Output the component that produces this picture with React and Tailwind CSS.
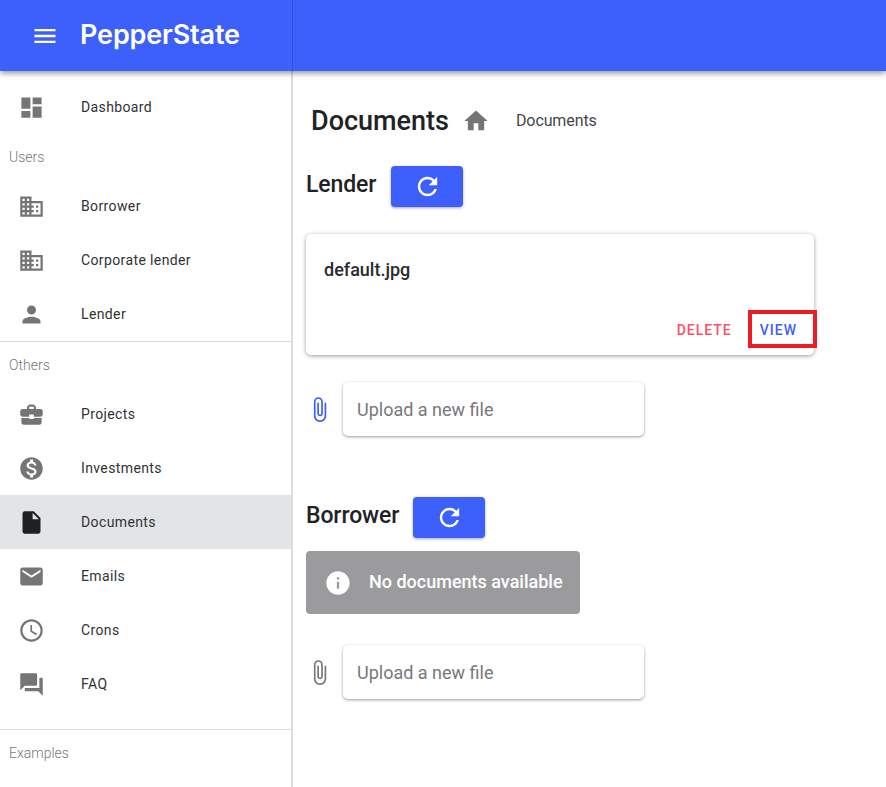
const P = {
  dashboard: "M3 13h8V3H3v10zm0 8h8v-6H3v6zm10 0h8V11h-8v10zm0-18v6h8V3h-8z",
  domain: "M12 7V3H2v18h20V7H12zM6 19H4v-2h2v2zm0-4H4v-2h2v2zm0-4H4V9h2v2zm0-4H4V5h2v2zm4 12H8v-2h2v2zm0-4H8v-2h2v2zm0-4H8V9h2v2zm0-4H8V5h2v2zm10 12h-8v-2h2v-2h-2v-2h2v-2h-2V9h8v10zm-2-8h-2v2h2v-2zm0 4h-2v2h2v-2z",
  person: "M12 12c2.21 0 4-1.79 4-4s-1.79-4-4-4-4 1.79-4 4 1.79 4 4 4zm0 2c-2.67 0-8 1.34-8 4v2h16v-2c0-2.66-5.33-4-8-4z",
  work: "M10 16v-1H3.01L3 19c0 1.11.89 2 2 2h14c1.11 0 2-.89 2-2v-4h-7v1h-4zm10-9h-4.01V5l-2-2h-4l-2 2v2H4c-1.1 0-2 .9-2 2v3c0 1.11.89 2 2 2h6v-2h4v2h6c1.1 0 2-.9 2-2V9c0-1.1-.9-2-2-2zm-6 0h-4V5h4v2z",
  money: "M12 2C6.48 2 2 6.48 2 12s4.48 10 10 10 10-4.48 10-10S17.52 2 12 2zm1.41 16.09V20h-2.67v-1.93c-1.71-.36-3.16-1.46-3.27-3.4h1.96c.1 1.05.82 1.87 2.65 1.87 1.96 0 2.4-.98 2.4-1.59 0-.83-.44-1.61-2.67-2.14-2.48-.6-4.18-1.62-4.18-3.67 0-1.72 1.39-2.84 3.11-3.21V4h2.67v1.95c1.86.45 2.79 1.86 2.85 3.39H14.3c-.05-1.11-.64-1.87-2.22-1.87-1.5 0-2.4.68-2.4 1.64 0 .84.65 1.39 2.67 1.91s4.18 1.39 4.18 3.91c-.01 1.83-1.38 2.83-3.12 3.16z",
  file: "M6 2c-1.1 0-1.99.9-1.99 2L4 20c0 1.1.89 2 1.99 2H18c1.1 0 2-.9 2-2V8l-6-6H6zm7 7V3.5L18.5 9H13z",
  email: "M20 4H4c-1.1 0-1.99.9-1.99 2L2 18c0 1.1.9 2 2 2h16c1.1 0 2-.9 2-2V6c0-1.1-.9-2-2-2zm0 4l-8 5-8-5V6l8 5 8-5v2z",
  clock: "M11.99 2C6.47 2 2 6.48 2 12s4.47 10 9.99 10C17.52 22 22 17.52 22 12S17.52 2 11.99 2zM12 20c-4.42 0-8-3.58-8-8s3.58-8 8-8 8 3.58 8 8-3.58 8-8 8zm.5-13H11v6l5.25 3.15.75-1.23-4.5-2.67z",
  faq: "M21 6h-2v9H6v2c0 .55.45 1 1 1h11l4 4V7c0-.55-.45-1-1-1zm-4 6V3c0-.55-.45-1-1-1H3c-.55 0-1 .45-1 1v14l4-4h10c.55 0 1-.45 1-1z",
  home: "M10 20v-6h4v6h5v-8h3L12 3 2 12h3v8z",
  refresh: "M17.65 6.35C16.2 4.9 14.21 4 12 4c-4.42 0-7.99 3.58-7.99 8s3.57 8 7.99 8c3.73 0 6.84-2.55 7.73-6h-2.08c-.82 2.33-3.04 4-5.65 4-3.31 0-6-2.69-6-6s2.69-6 6-6c1.66 0 3.14.69 4.22 1.78L13 11h7V4l-2.35 2.35z",
  clip: "M16.5 6v11.5c0 2.21-1.79 4-4 4s-4-1.79-4-4V5c0-1.38 1.12-2.5 2.5-2.5s2.5 1.12 2.5 2.5v10.5c0 .55-.45 1-1 1s-1-.45-1-1V6H10v9.5c0 1.38 1.12 2.5 2.5 2.5s2.5-1.12 2.5-2.5V5c0-2.21-1.79-4-4-4S7 2.79 7 5v12.5c0 3.04 2.46 5.5 5.5 5.5s5.5-2.46 5.5-5.5V6h-1.5z",
  info: "M12 2C6.48 2 2 6.48 2 12s4.48 10 10 10 10-4.48 10-10S17.52 2 12 2zm1 15h-2v-6h2v6zm0-8h-2V7h2v2z",
  menu: "M3 18h18v-2H3v2zm0-5h18v-2H3v2zm0-7v2h18V6H3z",
};

function Icon({ d, className }) {
  return (
    <svg viewBox="0 0 24 24" fill="currentColor" className={className}>
      <path d={d} />
    </svg>
  );
}

function NavItem({ icon, label, active }) {
  return (
    <div className={"flex h-[54px] items-center " + (active ? "bg-[#e3e4e6]" : "")}>
      <div className="flex w-[81px] shrink-0 pl-[18px]">
        <Icon d={icon} className={"h-[27px] w-[27px] " + (active ? "text-[#1f2023]" : "text-[#757575]")} />
      </div>
      <span className="text-[14px] leading-none tracking-[0.38px] text-[#303236]">{label}</span>
    </div>
  );
}

function Section({ label }) {
  return (
    <div className="flex h-[45px] items-center pl-[9px] pt-[2px] text-[14px] font-light text-[#777777]">{label}</div>
  );
}

function Divider() {
  return <div className="h-px bg-[#dcdddf]" />;
}

function Heading({ title, gap }) {
  return (
    <div className="flex items-center">
      <h2 className={"pb-[4px] text-[23px] font-medium leading-[37px] tracking-[-0.1px] text-[#212226] " + gap}>{title}</h2>
      <button className="flex h-[41px] w-[72px] items-center justify-center rounded-[4px] bg-[#3d5ffb] text-white shadow-[0_1px_3px_rgba(0,0,0,0.35)]">
        <Icon d={P.refresh} className="h-[29px] w-[29px]" />
      </button>
    </div>
  );
}

function Upload({ color }) {
  return (
    <div className="flex items-center">
      <div className="flex w-[37px] justify-start">
        <Icon d={P.clip} className={"h-[27px] w-[27px] " + color} />
      </div>
      <div className="flex h-[54px] w-[301px] items-center rounded-[5px] bg-white pl-[14px] text-[18px] text-[#77787c] shadow-[0_1px_3px_rgba(0,0,0,0.4)]">
        Upload a new file
      </div>
    </div>
  );
}

export default function App() {
  return (
    <div className="h-[787px] w-[886px] overflow-hidden bg-white font-['Roboto',sans-serif]">
      <header className="relative z-10 flex h-[71px] bg-[#3d5ffb] shadow-[0_2px_6px_rgba(0,0,0,0.45)]">
        <div className="flex h-full w-[293px] items-center border-r border-[#3450d6] pl-[31px]">
          <Icon d={P.menu} className="h-[28px] w-[28px] text-white" />
          <span className="ml-[21px] pb-[2px] font-['Inter',sans-serif] text-[27px] font-semibold leading-none tracking-[-0.15px] text-white">
            PepperState
          </span>
        </div>
      </header>
      <div className="flex h-[716px]">
        <aside className="h-full w-[293px] shrink-0 border-r-2 border-[#dcdddf] pt-[9px]">
          <NavItem icon={P.dashboard} label="Dashboard" />
          <Section label="Users" />
          <NavItem icon={P.domain} label="Borrower" />
          <NavItem icon={P.domain} label="Corporate lender" />
          <NavItem icon={P.person} label="Lender" />
          <Divider />
          <Section label="Others" />
          <NavItem icon={P.work} label="Projects" />
          <NavItem icon={P.money} label="Investments" />
          <NavItem icon={P.file} label="Documents" active />
          <NavItem icon={P.email} label="Emails" />
          <NavItem icon={P.clock} label="Crons" />
          <NavItem icon={P.faq} label="FAQ" />
          <div className="h-[18px]" />
          <Divider />
          <Section label="Examples" />
        </aside>
        <main className="flex-1 pl-[13px]">
          <div className="mt-[33px] flex h-[33px] items-center pl-[5px]">
            <h1 className="pt-[2px] text-[27px] font-medium leading-none text-[#212226]">Documents</h1>
            <Icon d={P.home} className="ml-[13px] h-[28px] w-[28px] text-[#757575]" />
            <span className="ml-[26px] text-[16px] tracking-[-0.1px] text-[#45474b]">Documents</span>
          </div>
          <div className="mt-[29px]">
            <Heading title="Lender" gap="mr-[15px]" />
          </div>
          <div className="relative mt-[27px] h-[121px] w-[508px] rounded-[5px] bg-white shadow-[0_1px_4px_rgba(0,0,0,0.4)]">
            <div className="pl-[18px] pt-[25px] text-[18px] font-medium leading-[22px] text-[#2a2b2f]">default.jpg</div>
            <div className="absolute right-[17px] top-[87px] flex items-center gap-[28px] text-[14px] font-medium leading-[18px] tracking-[1px]">
              <span className="text-[#fb4f6b]">DELETE</span>
              <span className="text-[#3d5ffb]">VIEW</span>
            </div>
            <div className="absolute left-[442px] top-[76px] h-[38px] w-[69px] border-[4px] border-[#ed1c24]" />
          </div>
          <div className="mt-[27px]">
            <Upload color="text-[#3d5ffb]" />
          </div>
          <div className="mt-[61px]">
            <Heading title="Borrower" gap="mr-[14px]" />
          </div>
          <div className="mt-[13px] flex h-[63px] w-[274px] items-center rounded-[4px] bg-[#9b9b9d] pl-[18px] text-[18px] font-medium text-white">
            <Icon d={P.info} className="h-[28px] w-[28px]" />
            <span className="ml-[17px] pb-[2px]">No documents available</span>
          </div>
          <div className="mt-[31px]">
            <Upload color="text-[#77787c]" />
          </div>
        </main>
      </div>
    </div>
  );
}
